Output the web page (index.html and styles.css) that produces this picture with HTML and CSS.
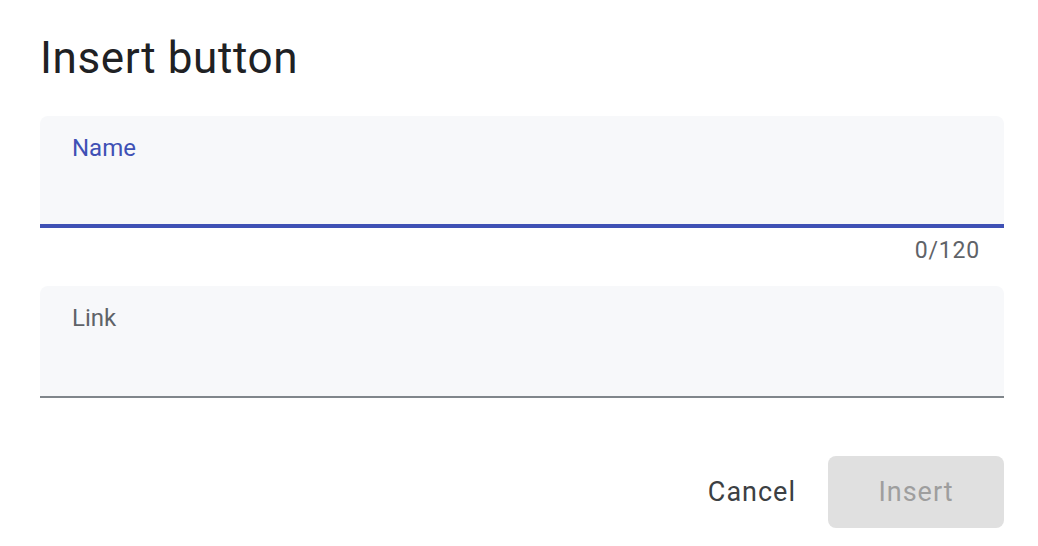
FILE: index.html
```html
<!DOCTYPE html>
<html>
<head>
<meta charset="utf-8">
<link rel="stylesheet" href="styles.css">
</head>
<body>
<div class="dialog">
  <h1 class="title">Insert button</h1>
  <div class="field focused">
    <label class="label">Name</label>
  </div>
  <div class="counter">0/120</div>
  <div class="field">
    <label class="label">Link</label>
  </div>
  <div class="actions">
    <button class="btn cancel">Cancel</button>
    <button class="btn insert" disabled>Insert</button>
  </div>
</div>
</body>
</html>
```
FILE: styles.css
```css
html, body {
  margin: 0;
  padding: 0;
  background: #ffffff;
}
.dialog {
  padding: 0 34px 0 40px;
  font-family: Roboto, "Noto Sans", sans-serif;
}
.title {
  margin: 0;
  padding-top: 32px;
  height: 116px;
  box-sizing: border-box;
  font-family: Roboto, sans-serif;
  font-weight: 400;
  font-size: 44px;
  line-height: 52px;
  letter-spacing: 0.6px;
  color: #202124;
}
.field {
  height: 112px;
  box-sizing: border-box;
  background: #f7f8fa;
  border-radius: 8px 8px 0 0;
  border-bottom: 2px solid #80868b;
  padding: 18px 32px 0;
}
.field.focused {
  border-bottom: 4px solid #3f51b5;
}
.label {
  display: block;
  font-size: 24px;
  line-height: 28px;
  color: #5f6368;
}
.focused .label {
  color: #3f51b5;
}
.counter {
  height: 58px;
  box-sizing: border-box;
  padding: 8px 24px 0 0;
  text-align: right;
  font-size: 23px;
  line-height: 30px;
  letter-spacing: 0.8px;
  color: #5f6368;
}
.actions {
  margin-top: 58px;
  display: flex;
  justify-content: flex-end;
  align-items: center;
  gap: 16px;
}
.btn {
  font-family: Roboto, sans-serif;
  font-size: 27px;
  font-weight: 400;
  letter-spacing: 1px;
  border: none;
  background: transparent;
  height: 72px;
  border-radius: 8px;
  padding: 0 16px;
}
.cancel {
  color: #3c4043;
}
.insert {
  width: 176px;
  background: #e0e0e0;
  color: #9e9e9e;
}
```
